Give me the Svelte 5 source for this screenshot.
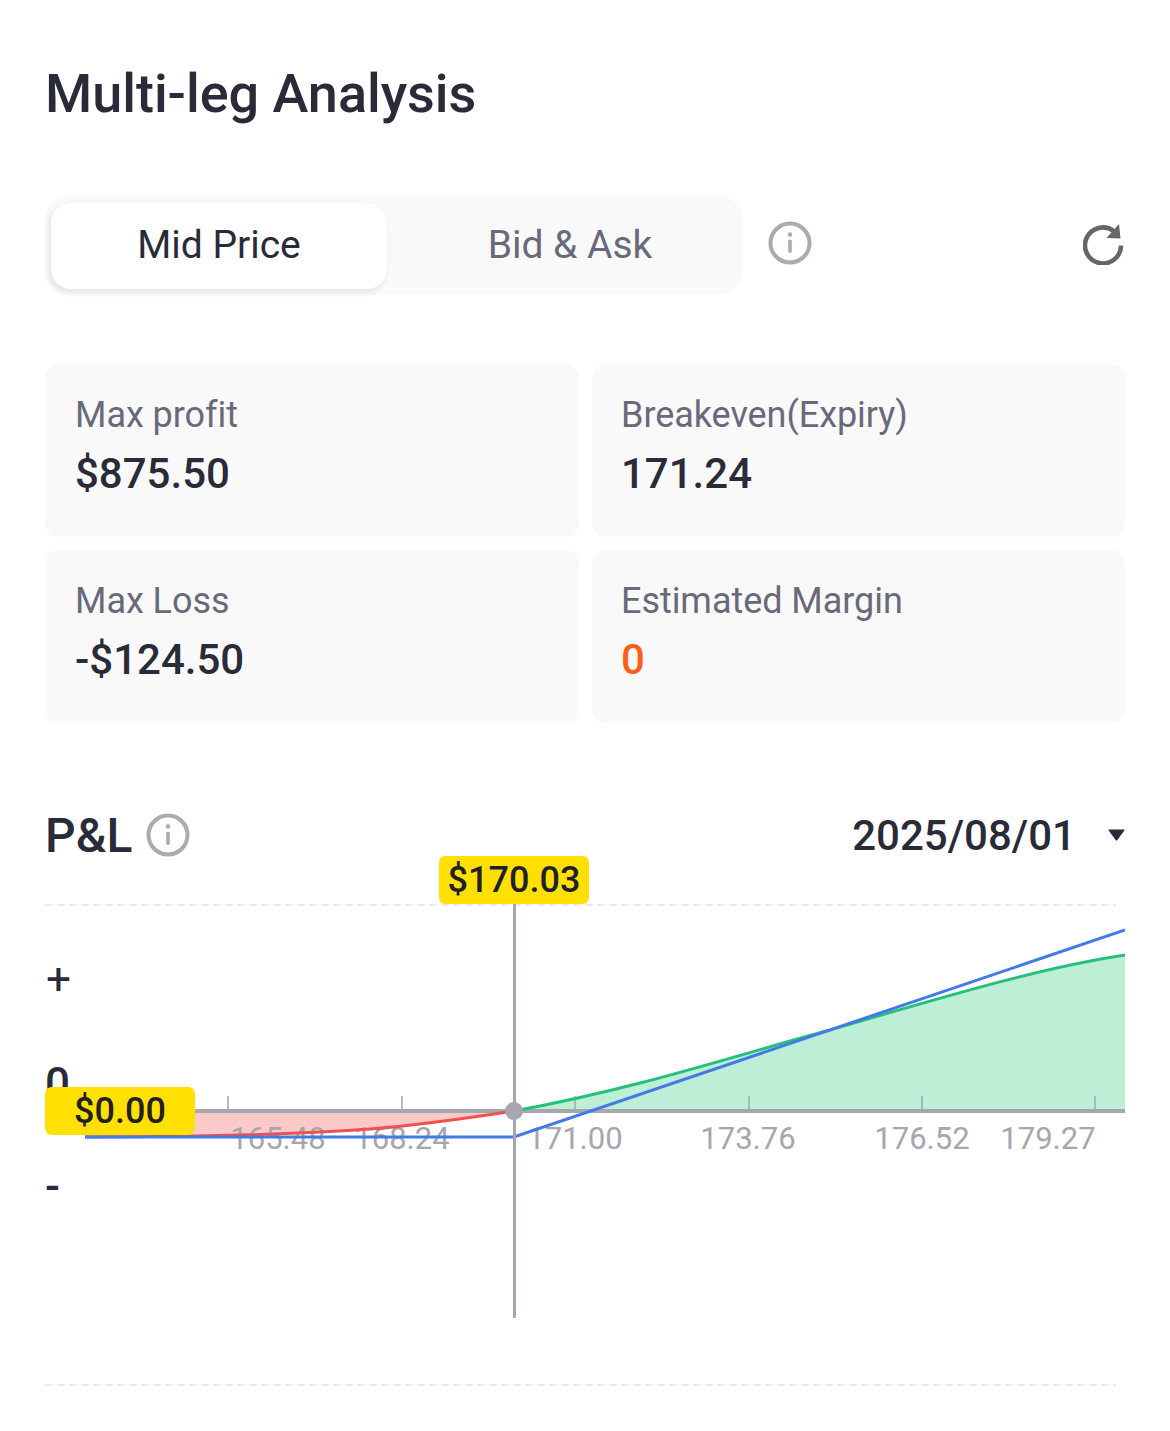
<script>
  const cards = [
    { label: 'Max profit', value: '$875.50' },
    { label: 'Breakeven(Expiry)', value: '171.24' },
    { label: 'Max Loss', value: '-$124.50' },
    { label: 'Estimated Margin', value: '0', accent: true }
  ];
  const ticks = [228, 402, 575, 749, 922, 1095];
  const labels = [
    ['165.48', 278], ['168.24', 402], ['171.00', 575],
    ['173.76', 748], ['176.52', 922], ['179.27', 1048]
  ];
</script>

<main class="page">
  <h1>Multi-leg Analysis</h1>

  <div class="toolbar">
    <div class="tabs">
      <button class="tab active">Mid Price</button>
      <button class="tab">Bid &amp; Ask</button>
    </div>
    <svg class="info" viewBox="0 0 44 44" aria-hidden="true">
      <circle cx="22" cy="22" r="19.5" fill="none" stroke="#a9abb3" stroke-width="4" />
      <circle cx="22" cy="13.5" r="2.2" fill="#a9abb3" />
      <rect x="20.2" y="18.5" width="3.6" height="13.5" rx="1.8" fill="#a9abb3" />
    </svg>
    <svg class="refresh" viewBox="0 0 42 42" aria-hidden="true">
      <path d="M38 22.5A18 18 0 1 1 31 8.2" fill="none" stroke="#666669" stroke-width="4.6" />
      <path d="M36 1 L37.5 15.5 L23.5 15 Z" fill="#666669" />
    </svg>
  </div>

  <section class="cards">
    {#each cards as c}
      <div class="card">
        <div class="label">{c.label}</div>
        <div class="value" class:accent={c.accent}>{c.value}</div>
      </div>
    {/each}
  </section>

  <header class="pl-head">
    <div class="pl-title">
      <h2>P&amp;L</h2>
      <svg class="info" viewBox="0 0 44 44" aria-hidden="true">
        <circle cx="22" cy="22" r="19.5" fill="none" stroke="#a9abb3" stroke-width="4" />
        <circle cx="22" cy="13.5" r="2.2" fill="#a9abb3" />
        <rect x="20.2" y="18.5" width="3.6" height="13.5" rx="1.8" fill="#a9abb3" />
      </svg>
    </div>
    <div class="date">
      <span>2025/08/01</span>
      <svg class="caret" viewBox="0 0 17 12" aria-hidden="true"><path d="M1 0.5H16Q17 0.5 16.3 1.6L9.4 11Q8.5 12 7.6 11L0.7 1.6Q0 0.5 1 0.5Z" fill="#2a2b38" /></svg>
    </div>
  </header>

  <svg class="chart" viewBox="45 856 1080 539" aria-label="P&amp;L chart">
    <line x1="45" x2="1116" y1="905" y2="905" class="dash" />
    <line x1="45" x2="1116" y1="1385" y2="1385" class="dash" />

    <text x="46" y="994" class="axis-sign plus">+</text>
    <text x="45" y="1099" class="axis-sign">0</text>
    <text x="45" y="1201" class="axis-sign">-</text>

    <path d="M85 1111V1137C220 1137 300 1134 370 1129C430 1124 480 1116 514 1111Z" fill="#fcc9c9" />
    <path d="M514 1111C640 1088 740 1054 830 1030C950 995 1040 968 1125 955V1111Z" fill="#bdeed6" />

    {#each ticks as x}
      <line x1={x} x2={x} y1="1096" y2="1110" class="tick" />
    {/each}
    <line x1="85" x2="1125" y1="1111" y2="1111" class="axis" />

    {#each labels as [t, x]}
      <text x={x} y="1149" class="xlabel">{t}</text>
    {/each}

    <path d="M85 1137C220 1137 300 1134 370 1129C430 1124 480 1116 514 1111" class="curve red" />
    <path d="M514 1111C640 1088 740 1054 830 1030C950 995 1040 968 1125 955" class="curve green" />
    <path d="M85 1137H514L1125 930" class="curve blue" />

    <line x1="514.5" x2="514.5" y1="900" y2="1318" class="cursor" />
    <circle cx="514" cy="1111" r="9" fill="#a5a6ae" />

    <rect x="439" y="856" width="150" height="48" rx="6" class="badge" />
    <text x="514" y="892" class="badge-text">$170.03</text>
    <rect x="45" y="1087" width="150" height="48" rx="7" class="badge" />
    <text x="120" y="1123" class="badge-text">$0.00</text>
  </svg>
</main>

<style>
  :global(body) {
    margin: 0;
    background: #fff;
  }
  .page {
    box-sizing: border-box;
    width: 1170px;
    height: 1431px;
    padding: 64px 45px 36px;
    font-family: Roboto, "Liberation Sans", sans-serif;
    color: #2a2b38;
    overflow: hidden;
  }
  h1 {
    margin: 0;
    font-size: 54px;
    line-height: 60px;
    font-weight: 500;
    letter-spacing: -0.03px;
  }
  .toolbar {
    display: flex;
    align-items: center;
    margin-top: 72px;
  }
  .tabs {
    display: flex;
    width: 698px;
    height: 99px;
    box-sizing: border-box;
    padding: 7px 4px 6px 6px;
    background: #f9f9fa;
    border-radius: 24px;
  }
  .tab {
    border: 0;
    background: none;
    padding: 0 0 2px 14px;
    font: 400 39px Roboto, sans-serif;
    color: #686a7a;
    flex: 1;
    border-radius: 20px;
  }
  .tab.active {
    flex: 0 0 336px;
    padding-left: 0;
    background: #fff;
    color: #2a2b38;
    box-shadow: -2px 3px 6px rgba(30, 30, 50, 0.1);
  }
  .info {
    width: 44px;
    height: 44px;
    flex: none;
  }
  .toolbar .info {
    margin: 0 0 5px 25px;
  }
  .refresh {
    width: 42px;
    height: 42px;
    margin: 0 0 3px auto;
    flex: none;
  }
  .cards {
    display: grid;
    grid-template-columns: 534px 533px;
    grid-auto-rows: 173px;
    gap: 13px;
    margin-top: 69px;
  }
  .card {
    background: #f9f9fa;
    border-radius: 14px;
    padding: 29px 30px 0;
  }
  .card:nth-child(even) {
    padding-left: 29px;
  }
  .label {
    font-size: 36px;
    line-height: 44px;
    color: #686a7a;
    letter-spacing: -0.05px;
  }
  .value {
    margin-top: 13px;
    font-size: 42px;
    line-height: 48px;
    font-weight: 500;
  }
  .accent {
    color: #ff5e1a;
  }
  .pl-head {
    display: flex;
    justify-content: space-between;
    align-items: center;
    height: 42px;
    margin-top: 91px;
  }
  .pl-title {
    display: flex;
    align-items: center;
    gap: 14px;
  }
  h2 {
    margin: 0;
    padding-top: 2px;
    font-size: 48px;
    line-height: 42px;
    font-weight: 500;
  }
  .date {
    display: flex;
    align-items: center;
    gap: 32px;
    font-size: 42px;
    line-height: 42px;
    font-weight: 500;
  }
  .date span {
    padding-top: 2px;
  }
  .caret {
    width: 17px;
    height: 12px;
  }
  .chart {
    display: block;
    width: 1080px;
    height: 539px;
    font-family: Roboto, "Liberation Sans", sans-serif;
  }
  .dash {
    stroke: #e4e4e7;
    stroke-width: 1.5;
    stroke-dasharray: 8 4;
  }
  .axis-sign {
    font-size: 44px;
    font-weight: 500;
    fill: #2a2b38;
  }
  .plus {
    font-weight: 400;
  }
  .tick {
    stroke: #a5a6ae;
    stroke-width: 1.5;
  }
  .axis {
    stroke: #a5a6ae;
    stroke-width: 4;
  }
  .xlabel {
    font-size: 31px;
    fill: #a5a6ae;
    text-anchor: middle;
  }
  .curve {
    fill: none;
    stroke-width: 3;
  }
  .red { stroke: #f0504f; }
  .green { stroke: #25c07a; }
  .blue { stroke: #4479e8; }
  .cursor {
    stroke: #a5a6ae;
    stroke-width: 3;
  }
  .badge {
    fill: #ffe000;
  }
  .badge-text {
    font-size: 36px;
    font-weight: 500;
    fill: #1f2028;
    text-anchor: middle;
  }
</style>
